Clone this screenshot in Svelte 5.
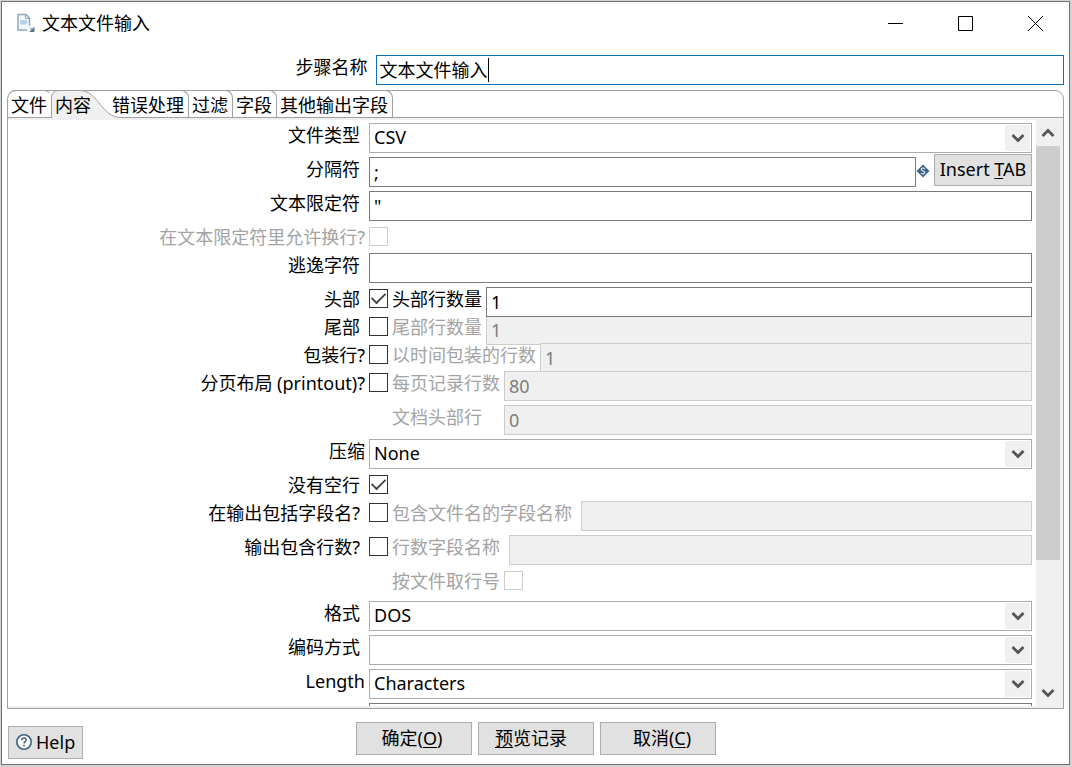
<script>
  const tabs = ['文件', '内容', '错误处理', '过滤', '字段', '其他输出字段'];
  let active = $state('内容');

  const rows = [
    { id: 'type', label: '文件类型', trail: true, kind: 'select', value: 'CSV' },
    { id: 'sep', label: '分隔符', trail: true, kind: 'separator', value: ';' },
    { id: 'quote', label: '文本限定符', trail: true, kind: 'text', value: '"' },
    { id: 'breaks', label: '在文本限定符里允许换行?', off: true, kind: 'check', tight: true },
    { id: 'escape', label: '逃逸字符', trail: true, kind: 'text', value: '' },
    { id: 'header', label: '头部', trail: true, kind: 'check', checked: true, tight: true, sub: '头部行数量', value: '1' },
    { id: 'footer', label: '尾部', trail: true, kind: 'check', tight: true, sub: '尾部行数量', value: '1', subOff: true },
    { id: 'wrapped', label: '包装行?', kind: 'check', tight: true, sub: '以时间包装的行数', value: '1', subOff: true },
    { id: 'paged', label: '分页布局 (printout)?', kind: 'check', sub: '每页记录行数', value: '80', subOff: true },
    { id: 'doc', kind: 'sub', sub: '文档头部行', wide: true, value: '0', subOff: true },
    { id: 'compress', label: '压缩', kind: 'select', value: 'None' },
    { id: 'noempty', label: '没有空行', trail: true, kind: 'check', checked: true, tight: true },
    { id: 'fname', label: '在输出包括字段名?', trail: true, kind: 'check', sub: '包含文件名的字段名称', subTrail: true, value: '', subOff: true },
    { id: 'rownum', label: '输出包含行数?', trail: true, kind: 'check', sub: '行数字段名称', subTrail: true, value: '', subOff: true },
    { id: 'byfile', kind: 'subcheck', sub: '按文件取行号', subOff: true },
    { id: 'format', label: '格式', trail: true, kind: 'select', value: 'DOS' },
    { id: 'encoding', label: '编码方式', trail: true, kind: 'select', value: '' },
    { id: 'length', label: 'Length', kind: 'select', value: 'Characters' },
    { id: 'limit', label: '', kind: 'text', value: '' }
  ];
</script>

{#snippet chevron(up)}
  <svg class="chev" width="14" height="10" viewBox="0 0 14 10" aria-hidden="true">
    <path d={up ? 'M1.500 8 7 2.500 12.500 8' : 'M1.500 2 7 7.500 12.500 2'} fill="none" stroke="#555" stroke-width="2.800" />
  </svg>
{/snippet}

<div class="window">
  <header class="titlebar">
    <svg class="logo" width="20" height="20" viewBox="0 0 20 20" aria-hidden="true">
      <path d="M11 17H2V1.500h8L13.500 5v8" fill="#f3f8fc" stroke="#8fa9bd" stroke-width="1.500" />
      <path d="M9.500 1.500V5.500h4" fill="none" stroke="#8fa9bd" />
      <path d="M4 7h6l1.500 2-1.500 2.500H4z" fill="#b9cfe2" />
      <path d="m14 14.500 3 3M18 14.500v4h-4z" fill="#5c7488" stroke="#5c7488" stroke-width="1" />
    </svg>
    <h1>文本文件输入</h1>
    <div class="winbtns">
      <button aria-label="最小化"><svg width="17" height="17"><path d="M1 8.500h15" stroke="#000" /></svg></button>
      <button aria-label="最大化"><svg width="17" height="17"><path d="M1.500 1.500h14v14h-14z" fill="none" stroke="#000" /></svg></button>
      <button aria-label="关闭"><svg width="17" height="17"><path d="m1 1 15 15M16 1 1 16" stroke="#000" /></svg></button>
    </div>
  </header>

  <div class="step">
    <label for="step">步骤名称</label>
    <div class="stepbox"><input id="step" value="文本文件输入" /><span class="caret"></span></div>
  </div>

  <section class="folder">
    <div class="tabs" role="tablist">
      {#each tabs as t}
        <button role="tab" class:active={t === active} aria-selected={t === active} onclick={() => (active = t)}>
          {#if t === active}
            <svg class="shape" width="74" height="28" viewBox="0 0 74 28" aria-hidden="true">
              <path d="M.5 28V8Q.5.500 8 .5H29C47 .5 50 27.500 70 27.500V28z" fill="#f0f0f0" />
              <path d="M.5 28V8Q.5.500 8 .5H29C47 .5 50 27.500 70 27.500" fill="none" stroke="#a0a0a0" />
            </svg>
          {/if}
          <span>{t}</span>
        </button>
      {/each}
    </div>

    <div class="pane">
      <div class="form">
        {#each rows as r}
          <div class="row {r.kind}" class:tight={r.tight} class:front={r.checked}>
            <div class="name">
              {#if r.label}<label for={r.id} class:trail={r.trail} class:off={r.off}>{r.label}</label>{/if}
            </div>
            <div class="ctl">
              {#if r.kind === 'select'}
                <div class="combo">
                  <select id={r.id}><option>{r.value}</option></select>
                  <span class="drop">{@render chevron(false)}</span>
                </div>
              {:else if r.kind === 'text'}
                <input class="field" id={r.id} value={r.value} aria-label={r.label ? undefined : 'Limit'} />
              {:else if r.kind === 'separator'}
                <input class="field" id={r.id} value={r.value} />
                <svg class="var" width="14" height="14" viewBox="0 0 14 14" aria-hidden="true">
                  <path d="M7 .5 13.500 7 7 13.500.5 7z" fill="#3d6587" />
                  <path d="M9 4.800C8 3.500 5 3.800 5.300 5.500 5.600 7 8.800 6.800 8.800 8.600 8.800 10.300 6 10.300 5 9.200" fill="none" stroke="#dfeaf3" stroke-width="1.200" />
                </svg>
                <button class="btn insert">Insert <u>T</u>AB</button>
              {:else}
                {#if r.kind === 'check'}
                  <input type="checkbox" id={r.id} checked={r.checked} disabled={r.off} />
                {/if}
                {#if r.sub}
                  <label class="sub" class:indent={r.kind !== 'check'} class:wide={r.wide} class:trail={r.subTrail} class:off={r.subOff} for="{r.id}-sub">{r.sub}</label>
                  {#if r.kind === 'subcheck'}
                    <input type="checkbox" id="{r.id}-sub" disabled />
                  {:else}
                    <input class="field" id="{r.id}-sub" value={r.value} disabled={r.subOff} />
                  {/if}
                {/if}
              {/if}
            </div>
          </div>
        {/each}
      </div>
      <div class="scroll">
        <button aria-label="向上滚动">{@render chevron(true)}</button>
        <div class="track"><div class="thumb"></div></div>
        <button aria-label="向下滚动">{@render chevron(false)}</button>
      </div>
    </div>
  </section>

  <footer>
    <button class="btn help">
      <svg width="18" height="18" viewBox="0 0 18 18" aria-hidden="true">
        <circle cx="9" cy="9" r="7.200" fill="#fff" stroke="#3d6080" stroke-width="1.600" />
        <path d="M6.800 7.300C6.800 4.300 11.300 4.500 11.200 7 11.100 8.600 9 8.600 9 10.500M9 11.800v1.600" fill="none" stroke="#3d6080" stroke-width="1.500" />
      </svg>
      Help
    </button>
    <div class="actions">
      <button class="btn ok">确定(<u>O</u>)</button>
      <button class="btn preview"><u>预</u>览记录</button>
      <button class="btn cancel">取消(<u>C</u>)</button>
    </div>
  </footer>
</div>

<style>
  :global(body) { background: #d4d4d4; overflow: hidden; }
  .window, .window * { box-sizing: border-box; }
  .window {
    height: calc(100vh - 3px);
    margin: 1px 2px 2px 1px;
    border: 1px solid #707070;
    background: #fff;
    display: flex;
    flex-direction: column;
    padding: 0 5px 0 6px;
    color: #000;
    font: 18px/24px "Noto Sans", "Noto Sans CJK SC", sans-serif;
  }
  :global(#app) { display: flow-root; }
  button, input, select { font: inherit; color: inherit; margin: 0; padding: 0; }
  button { border: 0; background: none; cursor: default; white-space: nowrap; }
  svg { display: block; flex: none; }
  u { text-underline-offset: 2px; text-decoration-thickness: 1px; text-decoration-skip-ink: none; }

  .titlebar { display: flex; align-items: center; height: 44px; padding: 0 20px 2px 8px; flex: none; }
  .logo { margin-right: 6px; }
  h1 { font-size: 18px; font-weight: 400; margin: 0; flex: 1; }
  .winbtns { display: flex; gap: 53px; }
  .winbtns button { width: 17px; height: 17px; }

  .step { display: flex; height: 44px; padding-top: 9px; flex: none; }
  .step label { width: calc(35% - 2px); text-align: right; padding-right: 8px; }
  .stepbox { flex: 1; display: flex; align-items: center; height: 30px; border: 1px solid #0f6fb5; padding-left: 3px; }
  .stepbox input { border: 0; outline: 0; background: none; field-sizing: content; height: 28px; padding-bottom: 2px; }
  .caret { width: 1px; height: 24px; background: #000; }

  .folder { flex: 1; min-height: 0; display: flex; flex-direction: column; border: 1px solid #a0a0a0; border-radius: 9px 9px 0 0; margin-left: -1px; }
  .tabs { display: flex; height: 28px; border-bottom: 1px solid #a0a0a0; flex: none; margin-top: -1px; }
  .tabs button { position: relative; height: 28px; padding: 0 4px 0 3px; border-right: 1px solid #a0a0a0; border-top: 1px solid #a0a0a0; border-top-right-radius: 8px; }
  .tabs button:first-child { border-top-left-radius: 8px; border-right-color: transparent; }
  .tabs button.active { border-color: transparent; padding-right: 17px; }
  .tabs span { position: relative; }
  .shape { position: absolute; left: -1px; top: -1px; }

  .pane { flex: 1; min-height: 0; display: flex; overflow: hidden; border: solid #f0f0f0; border-width: 2px 3px 2px 0; }
  .form { flex: 1; min-width: 0; overflow: hidden; padding: 3px 4px 0 0; display: flex; flex-direction: column; gap: 4px; }
  .row { display: grid; grid-template-columns: 35fr 65fr; column-gap: 4px; height: 30px; flex: none; }
  .tight { height: 24px; }
  .front { position: relative; z-index: 1; }
  .subcheck { height: 28px; }
  .name { text-align: right; white-space: nowrap; }
  .trail { padding-right: 5px; }
  .ctl { display: flex; align-items: flex-start; gap: 4px; min-width: 0; }
  .sub { white-space: nowrap; }
  .indent { margin-left: 23px; }
  .wide { min-width: 108px; }
  .off { color: #a3a3a3; }

  .field { flex: 1; min-width: 0; height: 30px; border: 1px solid #7a7a7a; border-radius: 0; background: #fff; padding: 0 4px; outline: 0; }
  .field:disabled { background: #f0f0f0; border-color: #ccc; color: #7d7d7d; }
  .combo { flex: 1; display: flex; position: relative; height: 30px; }
  select { appearance: none; width: 100%; border: 1px solid #acacac; border-radius: 0; background: #fff; padding: 0 28px 2px 4px; }
  .drop { position: absolute; right: 2px; top: 2px; width: 25px; height: 26px; background: #f0f0f0; display: grid; place-items: center; pointer-events: none; }

  input[type='checkbox'] { appearance: none; flex: none; width: 19px; height: 19px; margin-top: 2px; border: 1px solid #333; background: #fff; }
  input[type='checkbox']:disabled { border-color: #ccc; }
  input[type='checkbox']:checked { display: grid; place-items: center; }
  input[type='checkbox']:checked::before { content: ''; width: 13px; height: 7px; border: solid #444; border-width: 0 0 2px 2px; transform: translateY(-2px) rotate(-45deg) scale(.9); }

  .separator .ctl { gap: 0; }
  .var { margin: 7px 4px 0 0; }
  .btn { border: 1px solid #adadad; background: #e1e1e1; height: 33px; padding-bottom: 2px; }
  .insert { margin-top: -3px; width: 98px; height: 32px; }

  .scroll { width: 24px; background: #f0f0f0; display: flex; flex-direction: column; flex: none; }
  .scroll button { height: 26px; display: grid; place-items: center; flex: none; }
  .track { flex: 1; }
  .thumb { height: 77.500%; background: #cdcdcd; }

  footer { display: grid; grid-template-columns: 1fr auto 1fr; height: 55px; padding-top: 13px; flex: none; }
  .help { display: flex; align-items: center; gap: 3px; margin-top: 4px; padding: 0 7px 2px 6px; justify-self: start; }
  .actions { display: flex; gap: 6px; }
  .actions .btn { width: 116px; }
  .actions .ok { padding-right: 4px; }
  .actions .preview { padding-right: 10px; }
  .actions .cancel { padding-left: 8px; }
</style>
